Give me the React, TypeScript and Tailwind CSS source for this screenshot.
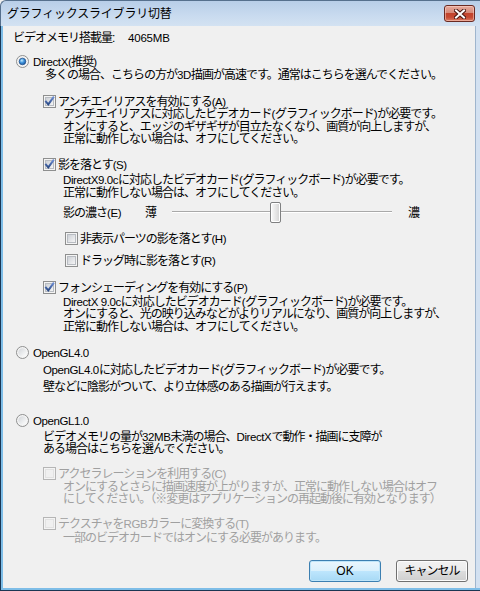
import React from "react"

// latin runs are set a bit smaller with light tracking, kana/kanji are squeezed to the UI font's width
const T = ({ s }: { s: string }) => (
  <span className="flex items-baseline">
    {s
      .split(/([A-Za-z0-9.() ]+)/)
      .filter(Boolean)
      .map((p, i) => (
        <span key={i} className={/[A-Za-z0-9()]/.test(p) ? "text-[11.5px] tracking-[-0.4px]" : undefined}>
          {p}
        </span>
      ))}
  </span>
)

const Radio = ({ checked }: { checked?: boolean }) => (
  <svg width="13" height="13" viewBox="0 0 13 13" className="shrink-0">
    <defs>
      <linearGradient id="rb-bg" x1="0" y1="0" x2="1" y2="1">
        <stop offset="0" stopColor="#d2d5d9" />
        <stop offset="1" stopColor="#ffffff" />
      </linearGradient>
      <radialGradient id="rb-dot" cx="0.4" cy="0.35" r="0.75">
        <stop offset="0" stopColor="#c4ecff" />
        <stop offset="0.45" stopColor="#3f93dc" />
        <stop offset="1" stopColor="#174a8e" />
      </radialGradient>
    </defs>
    <circle cx="6.5" cy="6.5" r="6" fill="#f4f4f4" stroke="#8e8f8f" />
    <circle cx="6.5" cy="6.5" r="4.2" fill="url(#rb-bg)" />
    {checked && <circle cx="6.5" cy="6.5" r="3.3" fill="url(#rb-dot)" stroke="#1d4f8c" strokeWidth="0.7" />}
  </svg>
)

const Check = ({ checked, disabled }: { checked?: boolean; disabled?: boolean }) => (
  <svg width="13" height="13" viewBox="0 0 13 13" className="shrink-0">
    <defs>
      <linearGradient id="cb-in" x1="0" y1="0" x2="1" y2="1">
        <stop offset="0" stopColor="#cbcfd5" />
        <stop offset="1" stopColor="#f7f7f7" />
      </linearGradient>
      <linearGradient id="cb-mark" x1="0" y1="0" x2="0" y2="1">
        <stop offset="0" stopColor="#6a8ad0" />
        <stop offset="1" stopColor="#2a4a86" />
      </linearGradient>
    </defs>
    <rect x="0.5" y="0.5" width="12" height="12" fill="#f4f4f4" stroke={disabled ? "#b5b5b5" : "#8e8f8f"} />
    <rect x="2.5" y="2.5" width="8" height="8" fill={disabled ? "#f0f0f0" : "url(#cb-in)"} stroke={disabled ? "#e2e2e2" : "#b8bcc2"} />
    {checked && (
      <path d="M3 6.6 L5.3 9.3 L10.3 2.4" fill="none" stroke="url(#cb-mark)" strokeWidth="2" strokeLinecap="square" />
    )}
  </svg>
)

const CheckRow = ({
  label,
  checked,
  disabled,
  className,
}: {
  label: string
  checked?: boolean
  disabled?: boolean
  className: string
}) => (
  <div className={"flex items-center gap-[2px] h-[13px] leading-[12px] " + className}>
    <Check checked={checked} disabled={disabled} />
    <span className={disabled ? "text-[#a0a0a0]" : ""}>
      <T s={label} />
    </span>
  </div>
)

export default function App() {
  return (
    <div className="w-[480px] h-[591px] flex flex-col bg-[#f0f0f0] overflow-hidden whitespace-nowrap text-black text-[12px] tracking-[-1px] font-['Liberation_Sans','Noto_Sans_CJK_JP',sans-serif]">
      {/* title bar */}
      <div className="h-[26px] shrink-0 flex items-center pl-[6px] pr-[5px] rounded-tl-[6px] border-t border-l border-[#56708d] bg-[linear-gradient(to_bottom,#b8cee8,#c9dbef_60%,#d3e2f2)]">
        <span className="text-[12px] tracking-[-0.2px]">グラフィックスライブラリ切替</span>
        <div className="ml-auto w-[31px] h-[17px] flex items-center justify-center rounded-[3px] border border-[#6a2a22] bg-[linear-gradient(to_bottom,#e7aa9d_0%,#d68a79_45%,#c2432c_50%,#c64a33_75%,#dc7c63_100%)] shadow-[inset_0_0_0_1px_rgba(255,220,210,0.5)]">
          <svg width="12" height="10" viewBox="0 0 12 10">
            <path d="M2 1.5 L10 8.5 M10 1.5 L2 8.5" stroke="#4a1610" strokeWidth="4" strokeLinecap="square" />
            <path d="M2 1.5 L10 8.5 M10 1.5 L2 8.5" stroke="#ffffff" strokeWidth="2" strokeLinecap="square" />
          </svg>
        </div>
      </div>

      {/* body with frame */}
      <div className="flex-1 flex min-h-0 border-l border-b border-[#1b3653]">
        <div className="flex-1 flex border-l-2 border-b-2 border-[#7ebde7]">
          <div className="flex-1 flex flex-col pt-[5px]">
            <div className="pl-[10px] h-[13px] leading-[12px] flex items-center">
              <span className="w-[115px]">ビデオメモリ搭載量:</span>
              <span className="text-[11.5px] tracking-[-0.2px]">4065MB</span>
            </div>

            {/* DirectX */}
            <div className="mt-[11px] pl-[13px] h-[13px] leading-[12px] flex items-center gap-[4px]">
              <Radio checked />
              <T s="DirectX(推奨)" />
            </div>
            <div className="mt-[1px] pl-[42px] leading-[13px]">
              <T s="多くの場合、こちらの方が3D描画が高速です。通常はこちらを選んでください。" />
            </div>

            <CheckRow className="mt-[13px] pl-[40px]" checked label="アンチエイリアスを有効にする(A)" />
            <div className="pl-[60px] leading-[12.5px]">
              <T s="アンチエイリアスに対応したビデオカード(グラフィックボード)が必要です。" />
              <div>オンにすると、エッジのギザギザが目立たなくなり、画質が向上しますが、</div>
              <div>正常に動作しない場合は、オフにしてください。</div>
            </div>

            <CheckRow className="mt-[12.5px] pl-[40px]" checked label="影を落とす(S)" />
            <div className="mt-[3px] pl-[60px] leading-[12.5px]">
              <T s="DirectX9.0cに対応したビデオカード(グラフィックボード)が必要です。" />
              <div>正常に動作しない場合は、オフにしてください。</div>
            </div>

            {/* shadow density slider */}
            <div className="mt-[3px] pl-[60px] h-[21px] leading-[12px] flex items-center">
              <span className="w-[82px]">
                <T s="影の濃さ(E)" />
              </span>
              <span className="w-[27px]">薄</span>
              <div className="relative w-[220px] h-[21px]">
                <div className="absolute left-0 right-0 top-[9px] h-[1px] bg-[#a9a9a9] shadow-[0_1px_0_#ffffff]" />
                <div className="absolute left-[98px] top-0 w-[11px] h-[21px] rounded-[2px] border border-[#7f8081] bg-[linear-gradient(to_right,#fbfbfb,#e3e3e3_60%,#d2d2d2)] shadow-[inset_0_0_0_1px_#ffffff]" />
              </div>
              <span className="ml-[16px]">濃</span>
            </div>

            <CheckRow className="mt-[9px] pl-[62px]" label="非表示パーツの影を落とす(H)" />
            <CheckRow className="mt-[9px] pl-[62px]" label="ドラッグ時に影を落とす(R)" />

            <CheckRow className="mt-[14px] pl-[40px]" checked label="フォンシェーディングを有効にする(P)" />
            <div className="mt-[1.75px] pl-[60px] leading-[12.5px]">
              <T s="DirectX 9.0cに対応したビデオカード(グラフィックボード)が必要です。" />
              <div>オンにすると、光の映り込みなどがよりリアルになり、画質が向上しますが、</div>
              <div>正常に動作しない場合は、オフにしてください。</div>
            </div>

            {/* OpenGL 4.0 */}
            <div className="mt-[12.75px] pl-[13px] h-[13px] leading-[12px] flex items-center gap-[4px]">
              <Radio />
              <T s="OpenGL4.0" />
            </div>
            <div className="mt-[5px] pl-[40px] leading-[13px]">
              <T s="OpenGL4.0に対応したビデオカード(グラフィックボード)が必要です。" />
            </div>
            <div className="mt-[4px] pl-[40px] leading-[13px]">
              壁などに陰影がついて、より立体感のある描画が行えます。
            </div>

            {/* OpenGL 1.0 */}
            <div className="mt-[20px] pl-[13px] h-[13px] leading-[12px] flex items-center gap-[4px]">
              <Radio />
              <T s="OpenGL1.0" />
            </div>
            <div className="mt-[3.75px] pl-[40px] leading-[12.5px]">
              <T s="ビデオメモリの量が32MB未満の場合、DirectXで動作・描画に支障が" />
              <div>ある場合はこちらを選んでください。</div>
            </div>

            <CheckRow className="mt-[11.25px] pl-[40px]" disabled label="アクセラレーションを利用する(C)" />
            <div className="mt-[0.5px] pl-[60px] leading-[12.5px] text-[#a0a0a0]">
              <div>オンにするとさらに描画速度が上がりますが、正常に動作しない場合はオフ</div>
              <div>にしてください。（※変更はアプリケーションの再起動後に有効となります）</div>
            </div>

            <CheckRow className="mt-[11.5px] pl-[40px]" disabled label="テクスチャをRGBカラーに変換する(T)" />
            <div className="mt-[1.5px] pl-[60px] leading-[13px] text-[#a0a0a0]">
              一部のビデオカードではオンにする必要があります。
            </div>

            {/* buttons */}
            <div className="mt-auto mb-[6px] pr-[7px] flex justify-end gap-[15px]">
              <button className="w-[72px] h-[22px] rounded-[3px] border border-[#3c7fb1] bg-[linear-gradient(to_bottom,#eaf6fd_0%,#d9f0fc_50%,#bee6fd_50%,#a7d9f5_100%)] shadow-[inset_0_0_0_1px_#bfe5f9] tracking-[0px] leading-[20px]">
                OK
              </button>
              <button className="w-[72px] h-[22px] rounded-[3px] border border-[#707070] bg-[linear-gradient(to_bottom,#f2f2f2_0%,#ebebeb_50%,#dddddd_50%,#cfcfcf_100%)] shadow-[inset_0_0_0_1px_#fcfcfc] leading-[20px]">
                キャンセル
              </button>
            </div>
          </div>
          <div className="w-[5px] border-l border-[#9fb5cd] bg-[#d3e1f1]" />
        </div>
      </div>
    </div>
  )
}
